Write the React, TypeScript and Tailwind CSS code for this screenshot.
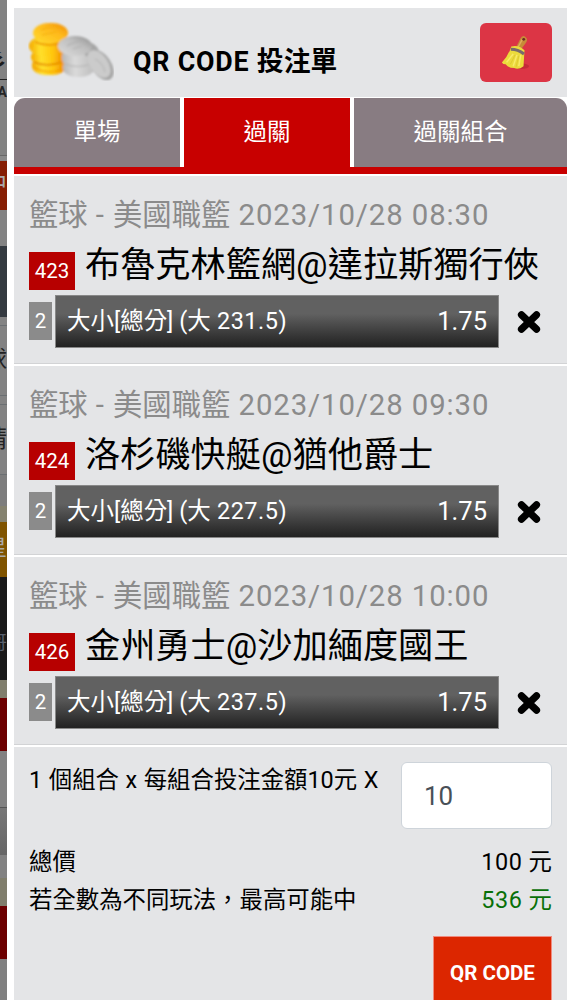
interface Bet {
  id: string;
  time: string;
  teams: string;
  line: string;
  odds: string;
  height: string;
}

interface Strip {
  className: string;
  text?: string;
  textClass?: string;
}

const bets: Bet[] = [
  { id: "423", time: "2023/10/28 08:30", teams: "布魯克林籃網@達拉斯獨行俠", line: "231.5", odds: "1.75", height: "h-[190px]" },
  { id: "424", time: "2023/10/28 09:30", teams: "洛杉磯快艇@猶他爵士", line: "227.5", odds: "1.75", height: "h-[191px]" },
  { id: "426", time: "2023/10/28 10:00", teams: "金州勇士@沙加緬度國王", line: "237.5", odds: "1.75", height: "h-[190px]" },
];

// dimmed page behind the drawer
const strips: Strip[] = [
  { className: "h-[52px] bg-[#828282]" },
  { className: "h-[27px] bg-[#828282]", text: "彡", textClass: "text-[22px] leading-[18px] font-bold text-[#1c1c1c]" },
  { className: "h-[76px] border-t border-[#222] bg-[#828282]", text: "A", textClass: "text-[14px] leading-[24px] font-bold text-[#252525]" },
  { className: "h-1.5 border-t border-[#686868] bg-[#8a8a8a]" },
  { className: "h-[49px] bg-[#861e03]", text: "中", textClass: "text-[24px] leading-[46px] text-[#aaa]" },
  { className: "h-[36px] bg-[#838383]" },
  { className: "h-[71px] bg-[#343a40]" },
  { className: "h-2 bg-[#838383]" },
  { className: "h-[71px] border-y border-[#6b6f72] bg-[#828282]", text: "球", textClass: "text-[24px] leading-[68px] text-[#222]" },
  { className: "h-2 bg-[#838383]" },
  { className: "h-[71px] border-y border-[#6b6f72] bg-[#828282]", text: "請", textClass: "text-[24px] leading-[68px] text-[#222]" },
  { className: "h-[31px] bg-[#7d7d7d]" },
  { className: "h-4 bg-[#85826f]" },
  { className: "h-[55px] bg-[#805400]", text: "星", textClass: "text-[22px] leading-[52px] text-[#aaa]" },
  { className: "h-[103px] bg-[#191919]", text: "哥", textClass: "text-[18px] leading-[132px] text-[#59606d]" },
  { className: "h-[18px] bg-[#807e6c]" },
  { className: "h-[53px] bg-[#6c0000]" },
  { className: "h-[56px] bg-[#828282]" },
  { className: "h-[48px] border-t border-[#555] bg-linear-to-b from-[#777] to-[#666]" },
  { className: "h-[23px] bg-[#828282]" },
  { className: "h-[28px] bg-[#807e6c]" },
  { className: "h-[53px] bg-[#6c0000]" },
  { className: "h-[41px] bg-[#808080]" },
];

function CoinsIcon() {
  return (
    <svg viewBox="0 0 86 60" className="h-[60px] w-[86px]">
      <defs>
        <linearGradient id="gold" x1="0" x2="1">
          <stop offset="0" stopColor="#f4a800" />
          <stop offset="0.3" stopColor="#ffe02c" />
          <stop offset="0.65" stopColor="#ffc50b" />
          <stop offset="1" stopColor="#ee8500" />
        </linearGradient>
        <linearGradient id="goldTop" x1="0" x2="1" y1="1" y2="0">
          <stop offset="0" stopColor="#ffdc30" />
          <stop offset="0.6" stopColor="#ffb91a" />
          <stop offset="1" stopColor="#f08a00" />
        </linearGradient>
        <linearGradient id="silver" x1="0" x2="1">
          <stop offset="0" stopColor="#b8b8b8" />
          <stop offset="0.4" stopColor="#dadada" />
          <stop offset="1" stopColor="#bdbdbd" />
        </linearGradient>
        <linearGradient id="silverTop" x1="0" x2="1" y1="1" y2="0">
          <stop offset="0" stopColor="#dcdcdc" />
          <stop offset="0.6" stopColor="#bebebe" />
          <stop offset="1" stopColor="#8c8c8c" />
        </linearGradient>
        <filter id="soft">
          <feGaussianBlur stdDeviation="0.8" />
        </filter>
      </defs>
      <g filter="url(#soft)">
        <rect x="4" y="35" width="34" height="19" rx="13" ry="9" fill="url(#gold)" />
        <path d="M6 46q14 9 30 1" fill="none" stroke="#f39d00" strokeWidth="1.2" />
        <rect x="3" y="27" width="34" height="18" rx="14" ry="9" fill="url(#gold)" />
        <path d="M6 41q13 6 28 0" fill="none" stroke="#e58a00" strokeWidth="1.6" />
        <rect x="1" y="15" width="37" height="20" rx="15" ry="10" fill="url(#gold)" />
        <path d="M7 21q14 6 29 0" fill="none" stroke="#ec9200" strokeWidth="1.6" />
        <rect x="5" y="2" width="35" height="20" rx="16" ry="10" fill="url(#goldTop)" />
        <path d="M13 9q9-4 18-1M14 14l14-3" fill="none" stroke="#f5ad12" strokeWidth="1.2" />
        <rect x="35" y="37" width="31" height="19" rx="13" ry="9" fill="url(#silver)" />
        <rect x="34" y="26" width="32" height="21" rx="14" ry="9" fill="url(#silver)" />
        <path d="M37 43q13 5 26 0" fill="none" stroke="#b6b6b6" strokeWidth="1.2" />
        <ellipse cx="62" cy="29" rx="10" ry="7" fill="#a6a6a6" transform="rotate(35 62 29)" />
        <ellipse cx="47" cy="25" rx="17" ry="10" fill="url(#silverTop)" />
        <path d="M39 25q7-5 17-4M45 28l9-3" fill="none" stroke="#b2b2b2" strokeWidth="1.3" />
        <ellipse cx="73" cy="44" rx="17" ry="10" fill="#a6a6a6" transform="rotate(55 73 44)" />
        <ellipse cx="71" cy="43" rx="15.5" ry="9" fill="#cbcbcb" transform="rotate(55 71 43)" />
        <path d="M67 38q8 4 10 13" fill="none" stroke="#b8b8b8" strokeWidth="1.2" />
      </g>
    </svg>
  );
}

function BroomIcon() {
  return (
    <svg viewBox="0 0 34 38" className="h-9 w-8">
      <ellipse cx="22" cy="33" rx="9" ry="3" fill="#b92533" opacity="0.7" />
      <path d="M16 15L22 3Q25-1 28 3Q30 5 27 9L21 17Z" fill="#c78b38" />
      <path d="M18 15L24 4" stroke="#e0ad5c" strokeWidth="1.5" />
      <circle cx="25.2" cy="4.5" r="1.5" fill="#6b2925" />
      <path d="M12 12Q20 10 26 16L25 33Q20 37 15 35Q9 35 6 31Q3 31 2 29Q9 22 12 12Z" fill="#ecdb3c" />
      <path d="M14 20L7 29M18 21L14 33M22 21L20 33" fill="none" stroke="#f8ea68" strokeWidth="1.6" />
      <path d="M16 21L11 31M20 22L17 34" fill="none" stroke="#d6c12c" strokeWidth="0.7" />
      <path d="M11.5 15Q19 15 25.5 20" fill="none" stroke="#796a6d" strokeWidth="3.2" />
    </svg>
  );
}

function RemoveIcon() {
  return (
    <svg viewBox="0 0 24 24" className="h-6 w-6">
      <path d="M4.5 4.8L19.5 19.2M19.5 4.8L4.5 19.2" stroke="#000" strokeWidth="7.2" strokeLinecap="round" />
    </svg>
  );
}

function BetRow({ bet }: { bet: Bet }) {
  return (
    <section className={`${bet.height} shrink-0 border-t-2 border-white bg-[#e4e5e7] px-[15px] pt-5 shadow-[inset_0_-1px_0_#d2d3d5]`}>
      <div className="h-10 text-[29.33px] leading-[38px] whitespace-nowrap text-[#8b8b8b]">
        籃球<span className="tracking-[0.9px]"> - </span>美國職籃<span className="tracking-[0.9px]"> {bet.time}</span>
      </div>
      <div className="flex h-[59px] whitespace-nowrap">
        <span className="mt-4 flex h-[38px] w-[46px] shrink-0 items-center justify-center bg-[#b70000] text-[20.5px] text-white">{bet.id}</span>
        <span className="ml-2.5 text-[35.2px] leading-[58px] text-black">{bet.teams}</span>
      </div>
      <div className="flex h-[53px]">
        <span className="mt-[7px] flex h-[38px] w-[23px] items-center justify-center bg-[#8b8b8b] text-[20.5px] text-white">2</span>
        <div className="ml-[3px] flex h-[53px] w-[444px] items-center justify-between border border-[#888] bg-linear-to-b from-[#616161] from-35% to-[#222] px-[11px] text-white">
          <span className="text-[23.47px]">
            大小[總分] (大<span className="tracking-[0.5px]"> {bet.line})</span>
          </span>
          <span className="text-[25.5px]">{bet.odds}</span>
        </div>
        <button className="ml-[18px] flex items-center">
          <RemoveIcon />
        </button>
      </div>
    </section>
  );
}

export default function App() {
  return (
    <div className="flex h-[1000px] w-[573px] overflow-hidden bg-white font-[Roboto,'Noto_Sans_CJK_TC',sans-serif]">
      <aside className="w-[7px] shrink-0 overflow-hidden">
        {strips.map((strip, i) => (
          <div key={i} className={`flex w-[7px] justify-end overflow-hidden ${strip.className}`}>
            {strip.text && <span className={`shrink-0 ${strip.textClass}`}>{strip.text}</span>}
          </div>
        ))}
      </aside>

      <main className="ml-[7px] flex w-[553px] flex-col pt-2">
        <header className="flex h-[89px] shrink-0 items-start bg-[#e4e5e7] pr-[15px] pl-[14px]">
          <div className="mt-[13px]">
            <CoinsIcon />
          </div>
          <h1 className="mt-9 ml-[19px] text-[26.8px] leading-9 font-bold whitespace-nowrap text-black">
            <span className="tracking-[0.8px]">QR CODE </span>投注單
          </h1>
          <button className="mt-[15px] ml-auto flex h-[59px] w-[72px] items-center justify-center rounded-md bg-[#dc3545]">
            <BroomIcon />
          </button>
        </header>

        <nav className="mt-px flex h-[76px] shrink-0 gap-1 border-b-[7px] border-[#c80000] text-[23.47px] text-white">
          <button className="w-[166px] rounded-tl-[11px] bg-[#887c82]">單場</button>
          <button className="w-[166px] bg-[#c80000]">過關</button>
          <button className="flex-1 rounded-tr-[11px] bg-[#887c82]">過關組合</button>
        </nav>

        {bets.map((bet) => (
          <BetRow key={bet.id} bet={bet} />
        ))}

        <section className="h-[255px] shrink-0 overflow-hidden border-t-2 border-white bg-[#e4e5e7] px-[15px] pt-[15px] text-[23.4px] text-black">
          <div className="flex h-[82px] items-start justify-between">
            <span className="leading-9 whitespace-nowrap [word-spacing:0.8px]">1 個組合 x 每組合投注金額10元 X</span>
            <input
              defaultValue="10"
              className="h-[67px] w-[151px] rounded-md border border-[#ced4da] bg-white px-[22px] text-[26px] text-[#495057]"
            />
          </div>
          <div className="flex h-[38px] items-center justify-between">
            <span>總價</span>
            <span>
              <span className="tracking-[0.5px]">100 </span>元
            </span>
          </div>
          <div className="flex h-[38px] items-center justify-between">
            <span>若全數為不同玩法，最高可能中</span>
            <span className="text-[#087008]">
              <span className="tracking-[0.5px]">536 </span>元
            </span>
          </div>
          <button className="mt-4 ml-auto flex h-[74px] w-[119px] items-center justify-center border border-[#f08b80] bg-[#dc2600] text-[20.5px] font-bold text-white">
            QR CODE
          </button>
        </section>
      </main>
    </div>
  );
}
